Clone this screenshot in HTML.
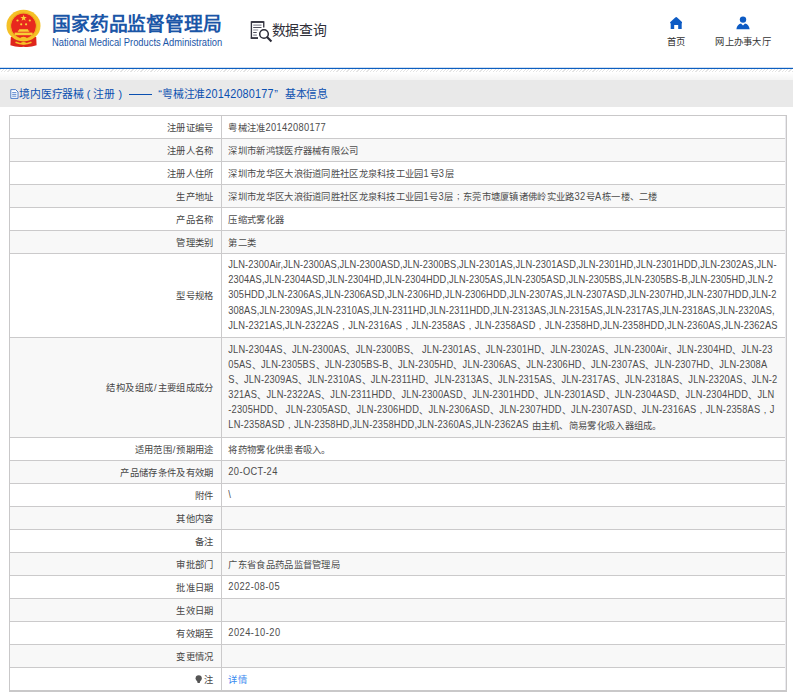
<!DOCTYPE html>
<html lang="zh-CN">
<head>
<meta charset="utf-8">
<title>数据查询</title>
<style>
html,body{margin:0;padding:0;}
body{width:793px;height:697px;position:relative;overflow:hidden;background:#fff;font-family:"Liberation Sans",sans-serif;color:#333;}
.abs{position:absolute;white-space:nowrap;}
.logo-cn{left:52px;top:12.8px;font-size:18.8px;line-height:24px;font-weight:bold;color:#1b56a7;letter-spacing:0;}
.logo-en{left:52px;top:37px;font-size:10px;line-height:12px;color:#1b56a7;transform:scaleX(0.936);transform-origin:0 0;}
.sjcx{left:271.5px;top:19.5px;font-size:13.9px;line-height:20px;color:#30303a;}
.nav{font-size:9.3px;line-height:12px;color:#333;text-align:center;}
.blueline{left:0;top:67px;width:793px;height:3px;background:linear-gradient(to bottom,rgba(13,95,192,.2) 0,rgba(13,95,192,.2) 1px,#0d5fc0 1px,#0d5fc0 2px,rgba(13,95,192,.1) 2px,rgba(13,95,192,.1) 3px);}
.hatch{left:0;top:69px;width:793px;height:3px;background:repeating-linear-gradient(135deg,#e4e4e4 0,#e4e4e4 0.8px,#fff 0.8px,#fff 2.35px);}
.grad{left:0;top:72px;width:793px;height:8px;background:linear-gradient(#fff,#f4f4f4);}
.band{left:0;top:80px;width:793px;height:27px;background:#e9e9e9;}
.title{top:87.3px;font-size:10.85px;line-height:15px;color:#0b50b0;}
.tbl{left:9px;top:115px;width:778px;height:577px;box-sizing:border-box;border:1px solid #c9c8c9;border-bottom:2px solid #c9c8c9;}
.row{position:absolute;left:10px;width:775px;}
.row.g{background:#f8f8f8;}
.hl{position:absolute;left:10px;width:775px;height:1px;background:#cbcacb;}
.rb{position:absolute;left:785px;top:116px;width:1px;height:574px;background:#eaeaee;}
.vl{position:absolute;left:221px;top:116px;width:1px;height:574px;background:#cbcacb;}
.lab{position:absolute;right:579.4px;font-size:9.3px;color:#464646;white-space:nowrap;text-align:right;}
.val{position:absolute;left:228.3px;font-size:9.3px;color:#4c4c4c;white-space:nowrap;}
.val a{color:#3a8af0;text-decoration:none;}
.ln{display:block;height:15.3px;line-height:15.3px;}
i{display:inline-block;font-style:normal;text-align:center;letter-spacing:0;width:9.3px;position:relative;top:1.1px;}
b{display:inline-block;font-weight:normal;white-space:pre;transform:scaleY(1.075);position:relative;transform-origin:0 72%;}
.mx b{top:0.9px;}
.lo b{top:0.4px;}
i.p{top:-0.3px;}
.lab i{width:9.36px;}
.lab i.sl{width:4.4px;}
.logo-cn i,.sjcx i,.title i,.nav i{top:0;}
.logo-cn i{width:18.85px;}
.sjcx i{width:13.9px;}
.title i{width:10.85px;}
#jbxx i{width:10.6px;}
</style>
</head>
<body>
<svg class="abs" style="left:5px;top:8px" width="38" height="40" viewBox="0 0 38 40">
<path d="M5.8 29 L5.4 37.2 Q12 39.6 18.5 38.7 Q25 39.6 31.6 37.2 L31.2 29 Z" fill="#df251b"/>
<ellipse cx="18.5" cy="17.65" rx="17" ry="15.8" fill="#f5c127"/>
<circle cx="18.5" cy="18" r="12.4" fill="#e8281e"/>
<circle cx="18.5" cy="18" r="13.2" fill="none" stroke="#e9a51a" stroke-width="0.7"/>
<g transform="translate(0.1,1.6)">
<polygon points="18.5,5.2 19.3,7.5 21.7,7.5 19.8,8.9 20.5,11.2 18.5,9.8 16.5,11.2 17.2,8.9 15.3,7.5 17.7,7.5" fill="#f8d43a"/>
<circle cx="12.4" cy="10.9" r="1.1" fill="#f8d43a"/><circle cx="24.7" cy="10.9" r="1.1" fill="#f8d43a"/>
<circle cx="16.1" cy="14.7" r="1.1" fill="#f8d43a"/><circle cx="21" cy="14.7" r="1.1" fill="#f8d43a"/>
<path d="M14 19.6 h9 v1.2 h1.2 v1.3 h-11.4 v-1.3 h1.2 z" fill="#f8cf35"/>
<rect x="9.5" y="23" width="18" height="2.6" fill="#f8cf35"/>
</g>
<path d="M8.5 28.5 Q18.5 34.5 28.5 28.5" fill="none" stroke="#f5c127" stroke-width="1.6"/>
<ellipse cx="18.5" cy="30.4" rx="3.2" ry="1.7" fill="#f5c127"/>
<path d="M10.5 34.3 Q18.5 37.6 26.5 34.3" fill="none" stroke="#f5c127" stroke-width="1.5"/>
<ellipse cx="18.5" cy="35.2" rx="2.6" ry="1.3" fill="#f5c127"/>
</svg>
<div class="abs logo-cn"><i>国</i><i>家</i><i>药</i><i>品</i><i>监</i><i>督</i><i>管</i><i>理</i><i>局</i></div>
<div class="abs logo-en">National Medical Products Administration</div>
<svg class="abs" style="left:249px;top:19px" width="26" height="25" viewBox="0 0 26 25">
<path d="M14.75 8.4 V2.95 H2.4 V19.05 H9" fill="none" stroke="#33333f" stroke-width="1.35"/>
<path d="M2.4 2.95 H14.75" stroke="#33333f" stroke-width="1.6"/>
<path d="M1.8 19.05 H9" stroke="#33333f" stroke-width="1.6"/>
<path d="M4.2 6.15 H12.5 M4.2 11 H9.2 M4.2 16.1 H7.9" stroke="#8e8e9a" stroke-width="1.1"/>
<path d="M4.2 8.5 H12.5 M4.2 13.5 H7.7" stroke="#3a3a48" stroke-width="0.9"/>
<circle cx="15" cy="15" r="4.3" fill="#fff" stroke="#2a2a36" stroke-width="1.5"/>
<path d="M18.3 18.3 L21.7 21.7" stroke="#2a2a36" stroke-width="2.1" stroke-linecap="square"/>
</svg>
<div class="abs sjcx"><i>数</i><i>据</i><i>查</i><i>询</i></div>
<svg class="abs" style="left:670px;top:16.9px" width="12.4" height="12" viewBox="0 0 12.4 12">
<path d="M6.2 0 Q6.7 0 7.1 0.4 L12.3 5.3 V6.2 H11.7 V12 H8.2 V7.9 H4.2 V12 H0.7 V6.2 H0.1 V5.3 L5.3 0.4 Q5.7 0 6.2 0 Z" fill="#0d5bc4"/>
</svg>
<div class="abs nav" style="left:656px;top:35.9px;width:40px;"><i>首</i><i>页</i></div>
<svg class="abs" style="left:736px;top:16px" width="14" height="13.5" viewBox="0 0 14 13.5">
<circle cx="7" cy="3.6" r="3.2" fill="#0d5bc4"/>
<path d="M0.4 13.3 C0.6 9.6 3 7.6 5 7.4 L7 9.6 L9 7.4 C11 7.6 13.4 9.6 13.6 13.3 Z" fill="#0d5bc4"/>
</svg>
<div class="abs nav" style="left:703px;top:35.9px;width:80px;"><i>网</i><i>上</i><i>办</i><i>事</i><i>大</i><i>厅</i></div>
<div class="abs blueline"></div>
<div class="abs hatch"></div>
<div class="abs grad"></div>
<div class="abs band"></div>
<svg class="abs" style="left:9.5px;top:89px" width="9" height="10" viewBox="0 0 9 10">
<path d="M0.8 0.6 H5.6 L8 3 V9.4 H0.8 Z" fill="#fff" stroke="#3a6fc4" stroke-width="0.9"/>
<path d="M2.2 3.6 H6.4 M2.2 5.4 H6.4 M2.2 7.2 H6.4" stroke="#3a6fc4" stroke-width="0.8"/>
</svg>
<div class="abs title" style="left:19px;"><i>境</i><i>内</i><i>医</i><i>疗</i><i>器</i><i>械</i><i style='width:9.2px'>(</i><i>注</i><i>册</i><i>)</i></div>
<div class="abs" style="left:129px;top:94px;width:23.1px;height:1px;background:#0b50b0;"></div>
<div class="abs title" style="left:158.3px;">“<i>粤</i><i>械</i><i>注</i><i>准</i><b style="letter-spacing:0.19px;transform:scaleY(1.12);transform-origin:0 75%">20142080177</b><span style="margin-left:0.6px">”</span></div>
<div class="abs title" style="left:285.2px;" id="jbxx"><i>基</i><i>本</i><i>信</i><i>息</i></div>
<div class="abs tbl"></div>
<div class="row" style="top:116px;height:22px"></div>
<div class="row g" style="top:139px;height:22px"></div>
<div class="row" style="top:162px;height:22px"></div>
<div class="row g" style="top:185px;height:22px"></div>
<div class="row" style="top:208px;height:22px"></div>
<div class="row g" style="top:231px;height:22px"></div>
<div class="row" style="top:254px;height:83px"></div>
<div class="row g" style="top:338px;height:99px"></div>
<div class="row" style="top:438px;height:22px"></div>
<div class="row g" style="top:461px;height:22px"></div>
<div class="row" style="top:484px;height:22px"></div>
<div class="row g" style="top:507px;height:22px"></div>
<div class="row" style="top:530px;height:22px"></div>
<div class="row g" style="top:553px;height:22px"></div>
<div class="row" style="top:576px;height:22px"></div>
<div class="row g" style="top:599px;height:22px"></div>
<div class="row" style="top:622px;height:22px"></div>
<div class="row g" style="top:645px;height:22px"></div>
<div class="row" style="top:668px;height:22px"></div>
<div class="hl" style="top:138px"></div>
<div class="hl" style="top:161px"></div>
<div class="hl" style="top:184px"></div>
<div class="hl" style="top:207px"></div>
<div class="hl" style="top:230px"></div>
<div class="hl" style="top:253px"></div>
<div class="hl" style="top:337px"></div>
<div class="hl" style="top:437px"></div>
<div class="hl" style="top:460px"></div>
<div class="hl" style="top:483px"></div>
<div class="hl" style="top:506px"></div>
<div class="hl" style="top:529px"></div>
<div class="hl" style="top:552px"></div>
<div class="hl" style="top:575px"></div>
<div class="hl" style="top:598px"></div>
<div class="hl" style="top:621px"></div>
<div class="hl" style="top:644px"></div>
<div class="hl" style="top:667px"></div>
<div class="vl"></div>
<div class="rb"></div>
<div class="lab" style="top:119.95px;height:15.3px;line-height:15.3px"><i>注</i><i>册</i><i>证</i><i>编</i><i>号</i></div>
<div class="val mx" style="top:119.95px"><span class="ln" id="v0_0" style="letter-spacing:0.3322px;height:15.3px;line-height:15.3px"><span><i>粤</i><i>械</i><i>注</i><i>准</i><b>20142080177</b></span></span></div>
<div class="lab" style="top:142.95px;height:15.3px;line-height:15.3px"><i>注</i><i>册</i><i>人</i><i>名</i><i>称</i></div>
<div class="val" style="top:142.95px"><span class="ln" id="v1_0" style="height:15.3px;line-height:15.3px"><span><i>深</i><i>圳</i><i>市</i><i>新</i><i>鸿</i><i>镁</i><i>医</i><i>疗</i><i>器</i><i>械</i><i>有</i><i>限</i><i>公</i><i>司</i></span></span></div>
<div class="lab" style="top:165.95px;height:15.3px;line-height:15.3px"><i>注</i><i>册</i><i>人</i><i>住</i><i>所</i></div>
<div class="val mx" style="top:165.95px"><span class="ln" id="v2_0" style="letter-spacing:0.6641px;height:15.3px;line-height:15.3px"><span><i>深</i><i>圳</i><i>市</i><i>龙</i><i>华</i><i>区</i><i>大</i><i>浪</i><i>街</i><i>道</i><i>同</i><i>胜</i><i>社</i><i>区</i><i>龙</i><i>泉</i><i>科</i><i>技</i><i>工</i><i>业</i><i>园</i><b>1</b><i>号</i><b>3</b><i>层</i></span></span></div>
<div class="lab" style="top:188.95px;height:15.3px;line-height:15.3px"><i>生</i><i>产</i><i>地</i><i>址</i></div>
<div class="val mx" style="top:188.95px"><span class="ln" id="v3_0" style="letter-spacing:0.5287px;height:15.3px;line-height:15.3px"><span><i>深</i><i>圳</i><i>市</i><i>龙</i><i>华</i><i>区</i><i>大</i><i>浪</i><i>街</i><i>道</i><i>同</i><i>胜</i><i>社</i><i>区</i><i>龙</i><i>泉</i><i>科</i><i>技</i><i>工</i><i>业</i><i>园</i><b>1</b><i>号</i><b>3</b><i>层</i><i class="p">;</i><i>东</i><i>莞</i><i>市</i><i>塘</i><i>厦</i><i>镇</i><i>诸</i><i>佛</i><i>岭</i><i>实</i><i>业</i><i>路</i><b>32</b><i>号</i><b>A</b><i>栋</i><i>一</i><i>楼</i><i>、</i><i>二</i><i>楼</i></span></span></div>
<div class="lab" style="top:211.95px;height:15.3px;line-height:15.3px"><i>产</i><i>品</i><i>名</i><i>称</i></div>
<div class="val" style="top:211.95px"><span class="ln" id="v4_0" style="height:15.3px;line-height:15.3px"><span><i>压</i><i>缩</i><i>式</i><i>雾</i><i>化</i><i>器</i></span></span></div>
<div class="lab" style="top:234.95px;height:15.3px;line-height:15.3px"><i>管</i><i>理</i><i>类</i><i>别</i></div>
<div class="val" style="top:234.95px"><span class="ln" id="v5_0" style="height:15.3px;line-height:15.3px"><span><i>第</i><i>二</i><i>类</i></span></span></div>
<div class="lab" style="top:287.83px;height:15.33px;line-height:15.33px"><i>型</i><i>号</i><i>规</i><i>格</i></div>
<div class="val" style="top:257.78px"><span class="ln" id="v6_0" style="letter-spacing:0.0968px;height:15.33px;line-height:15.33px"><span><b>JLN-2300Air,JLN-2300AS,JLN-2300ASD,JLN-2300BS,JLN-2301AS,JLN-2301ASD,JLN-2301HD,JLN-2301HDD,JLN-2302AS,JLN-</b></span></span><span class="ln" id="v6_1" style="letter-spacing:0.0889px;height:15.33px;line-height:15.33px"><span><b>2304AS,JLN-2304ASD,JLN-2304HD,JLN-2304HDD,JLN-2305AS,JLN-2305ASD,JLN-2305BS,JLN-2305BS-B,JLN-2305HD,JLN-2</b></span></span><span class="ln" id="v6_2" style="letter-spacing:0.1148px;height:15.33px;line-height:15.33px"><span><b>305HDD,JLN-2306AS,JLN-2306ASD,JLN-2306HD,JLN-2306HDD,JLN-2307AS,JLN-2307ASD,JLN-2307HD,JLN-2307HDD,JLN-2</b></span></span><span class="ln" id="v6_3" style="letter-spacing:0.1024px;height:15.33px;line-height:15.33px"><span><b>308AS,JLN-2309AS,JLN-2310AS,JLN-2311HD,JLN-2311HDD,JLN-2313AS,JLN-2315AS,JLN-2317AS,JLN-2318AS,JLN-2320AS,</b></span></span><span class="ln" id="v6_4" style="letter-spacing:0.1226px;height:15.33px;line-height:15.33px"><span><b>JLN-2321AS,JLN-2322AS</b><i class="p">,</i><b>JLN-2316AS</b><i class="p">,</i><b>JLN-2358AS</b><i class="p">,</i><b>JLN-2358ASD</b><i class="p">,</i><b>JLN-2358HD,JLN-2358HDD,JLN-2360AS,JLN-2362AS</b></span></span></div>
<div class="lab" style="top:380.03px;height:15.15px;line-height:15.15px"><i>结</i><i>构</i><i>及</i><i>组</i><i>成</i><i class="sl">/</i><i>主</i><i>要</i><i>组</i><i>成</i><i>成</i><i>分</i></div>
<div class="val" style="top:342.65px"><span class="ln" id="v7_0" style="letter-spacing:0.1653px;height:15.15px;line-height:15.15px"><span><b>JLN-2304AS</b><i>、</i><b>JLN-2300AS</b><i>、</i><b>JLN-2300BS</b><i>、</i><b> JLN-2301AS</b><i>、</i><b>JLN-2301HD</b><i>、</i><b>JLN-2302AS</b><i>、</i><b>JLN-2300Air</b><i>、</i><b>JLN-2304HD</b><i>、</i><b>JLN-23</b></span></span><span class="ln" id="v7_1" style="letter-spacing:0.1635px;height:15.15px;line-height:15.15px"><span><b>05AS</b><i>、</i><b>JLN-2305BS</b><i>、</i><b>JLN-2305BS-B</b><i>、</i><b>JLN-2305HD</b><i>、</i><b>JLN-2306AS</b><i>、</i><b>JLN-2306HD</b><i>、</i><b>JLN-2307AS</b><i>、</i><b>JLN-2307HD</b><i>、</i><b>JLN-2308A</b></span></span><span class="ln" id="v7_2" style="letter-spacing:0.1426px;height:15.15px;line-height:15.15px"><span><b>S</b><i>、</i><b>JLN-2309AS</b><i>、</i><b>JLN-2310AS</b><i>、</i><b>JLN-2311HD</b><i>、</i><b>JLN-2313AS</b><i>、</i><b>JLN-2315AS</b><i>、</i><b>JLN-2317AS</b><i>、</i><b>JLN-2318AS</b><i>、</i><b>JLN-2320AS</b><i>、</i><b>JLN-2</b></span></span><span class="ln" id="v7_3" style="letter-spacing:0.1862px;height:15.15px;line-height:15.15px"><span><b>321AS</b><i>、</i><b>JLN-2322AS</b><i>、</i><b>JLN-2311HDD</b><i>、</i><b>JLN-2300ASD</b><i>、</i><b>JLN-2301HDD</b><i>、</i><b>JLN-2301ASD</b><i>、</i><b>JLN-2304ASD</b><i>、</i><b>JLN-2304HDD</b><i>、</i><b>JLN</b></span></span><span class="ln" id="v7_4" style="letter-spacing:0.1882px;height:15.15px;line-height:15.15px"><span><b>-2305HDD</b><i>、</i><b> JLN-2305ASD</b><i>、</i><b>JLN-2306HDD</b><i>、</i><b>JLN-2306ASD</b><i>、</i><b>JLN-2307HDD</b><i>、</i><b>JLN-2307ASD</b><i>、</i><b>JLN-2316AS</b><i class="p">,</i><b>JLN-2358AS</b><i class="p">,</i><b>J</b></span></span><span class="ln" id="v7_5" style="letter-spacing:0.1657px;height:15.15px;line-height:15.15px"><span><b>LN-2358ASD</b><i class="p">,</i><b>JLN-2358HD,JLN-2358HDD,JLN-2360AS,JLN-2362AS </b><i>由</i><i>主</i><i>机</i><i>、</i><i>简</i><i>易</i><i>雾</i><i>化</i><i>吸</i><i>入</i><i>器</i><i>组</i><i>成</i><i>。</i></span></span></div>
<div class="lab" style="top:441.95px;height:15.3px;line-height:15.3px"><i>适</i><i>用</i><i>范</i><i>围</i><i class="sl">/</i><i>预</i><i>期</i><i>用</i><i>途</i></div>
<div class="val" style="top:441.95px"><span class="ln" id="v8_0" style="height:15.3px;line-height:15.3px"><span><i>将</i><i>药</i><i>物</i><i>雾</i><i>化</i><i>供</i><i>患</i><i>者</i><i>吸</i><i>入</i><i>。</i></span></span></div>
<div class="lab" style="top:464.95px;height:15.3px;line-height:15.3px"><i>产</i><i>品</i><i>储</i><i>存</i><i>条</i><i>件</i><i>及</i><i>有</i><i>效</i><i>期</i></div>
<div class="val lo" style="top:464.95px"><span class="ln" id="v9_0" style="letter-spacing:0.3813px;height:15.3px;line-height:15.3px"><span><b>20-OCT-24</b></span></span></div>
<div class="lab" style="top:487.95px;height:15.3px;line-height:15.3px"><i>附</i><i>件</i></div>
<div class="val lo" style="top:487.95px"><span class="ln" id="v10_0" style="height:15.3px;line-height:15.3px"><span><b>&#92;</b></span></span></div>
<div class="lab" style="top:510.95px;height:15.3px;line-height:15.3px"><i>其</i><i>他</i><i>内</i><i>容</i></div>
<div class="val" style="top:510.95px"><span class="ln" id="v11_0" style="height:15.3px;line-height:15.3px"><span></span></span></div>
<div class="lab" style="top:533.95px;height:15.3px;line-height:15.3px"><i>备</i><i>注</i></div>
<div class="val" style="top:533.95px"><span class="ln" id="v12_0" style="height:15.3px;line-height:15.3px"><span></span></span></div>
<div class="lab" style="top:556.95px;height:15.3px;line-height:15.3px"><i>审</i><i>批</i><i>部</i><i>门</i></div>
<div class="val" style="top:556.95px"><span class="ln" id="v13_0" style="height:15.3px;line-height:15.3px"><span><i>广</i><i>东</i><i>省</i><i>食</i><i>品</i><i>药</i><i>品</i><i>监</i><i>督</i><i>管</i><i>理</i><i>局</i></span></span></div>
<div class="lab" style="top:579.95px;height:15.3px;line-height:15.3px"><i>批</i><i>准</i><i>日</i><i>期</i></div>
<div class="val lo" style="top:579.95px"><span class="ln" id="v14_0" style="letter-spacing:0.4153px;height:15.3px;line-height:15.3px"><span><b>2022-08-05</b></span></span></div>
<div class="lab" style="top:602.95px;height:15.3px;line-height:15.3px"><i>生</i><i>效</i><i>日</i><i>期</i></div>
<div class="val" style="top:602.95px"><span class="ln" id="v15_0" style="height:15.3px;line-height:15.3px"><span></span></span></div>
<div class="lab" style="top:625.95px;height:15.3px;line-height:15.3px"><i>有</i><i>效</i><i>期</i><i>至</i></div>
<div class="val lo" style="top:625.95px"><span class="ln" id="v16_0" style="letter-spacing:0.4708px;height:15.3px;line-height:15.3px"><span><b>2024-10-20</b></span></span></div>
<div class="lab" style="top:648.95px;height:15.3px;line-height:15.3px"><i>变</i><i>更</i><i>情</i><i>况</i></div>
<div class="val" style="top:648.95px"><span class="ln" id="v17_0" style="height:15.3px;line-height:15.3px"><span></span></span></div>
<div class="lab" style="top:671.95px;height:15.3px;line-height:15.3px"><svg width="7.4" height="8.6" viewBox="0 0 7.4 8.6" style="vertical-align:-1.4px;margin-right:1.8px"><circle cx="3.7" cy="3.3" r="3.1" fill="#555"/><path d="M2 5.4 H5.4 L4.7 8.3 H2.7 Z" fill="#555"/></svg><i>注</i></div>
<div class="val" style="top:671.95px"><span class="ln" id="v18_0" style="height:15.3px;line-height:15.3px"><span><a><i>详</i><i>情</i></a></span></span></div>
</body>
</html>
